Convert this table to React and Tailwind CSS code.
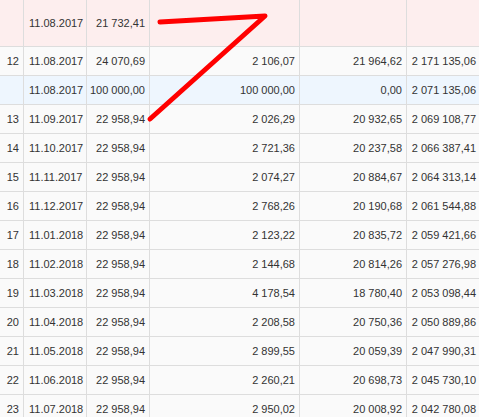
const rows = [
  { n: "", d: "11.08.2017", a: "21 732,41", p: "", i: "", r: "", bg: "bg-[#fdeeee]", h: "h-[47px]" },
  { n: "12", d: "11.08.2017", a: "24 070,69", p: "2 106,07", i: "21 964,62", r: "2 171 135,06" },
  { n: "", d: "11.08.2017", a: "100 000,00", p: "100 000,00", i: "0,00", r: "2 071 135,06", bg: "bg-[#eef6fe]" },
  { n: "13", d: "11.09.2017", a: "22 958,94", p: "2 026,29", i: "20 932,65", r: "2 069 108,77" },
  { n: "14", d: "11.10.2017", a: "22 958,94", p: "2 721,36", i: "20 237,58", r: "2 066 387,41" },
  { n: "15", d: "11.11.2017", a: "22 958,94", p: "2 074,27", i: "20 884,67", r: "2 064 313,14" },
  { n: "16", d: "11.12.2017", a: "22 958,94", p: "2 768,26", i: "20 190,68", r: "2 061 544,88" },
  { n: "17", d: "11.01.2018", a: "22 958,94", p: "2 123,22", i: "20 835,72", r: "2 059 421,66" },
  { n: "18", d: "11.02.2018", a: "22 958,94", p: "2 144,68", i: "20 814,26", r: "2 057 276,98" },
  { n: "19", d: "11.03.2018", a: "22 958,94", p: "4 178,54", i: "18 780,40", r: "2 053 098,44" },
  { n: "20", d: "11.04.2018", a: "22 958,94", p: "2 208,58", i: "20 750,36", r: "2 050 889,86" },
  { n: "21", d: "11.05.2018", a: "22 958,94", p: "2 899,55", i: "20 059,39", r: "2 047 990,31" },
  { n: "22", d: "11.06.2018", a: "22 958,94", p: "2 260,21", i: "20 698,73", r: "2 045 730,10" },
  { n: "23", d: "11.07.2018", a: "22 958,94", p: "2 950,02", i: "20 008,92", r: "2 042 780,08" },
];

const cell = "flex items-center border-r border-[#dddddd] shrink-0";

export default function App() {
  return (
    <div className="relative w-[479px] h-[417px] overflow-hidden bg-white text-[11px] text-[#333333]" style={{ fontFamily: '"Liberation Sans", Arial, sans-serif' }}>
      {rows.map((row, idx) => (
        <div key={idx} className={`flex border-b border-[#dddddd] ${row.h || "h-[29px]"} ${row.bg || "bg-[#fafafa]"}`}>
          <div className={`${cell} w-[24px] justify-end pr-[4px]`}>{row.n}</div>
          <div className={`${cell} w-[63px] pl-[5px]`}>{row.d}</div>
          <div className={`${cell} w-[63px] justify-end pr-[4px]`}>{row.a}</div>
          <div className={`${cell} w-[150px] justify-end pr-[4px]`}>{row.p}</div>
          <div className={`${cell} w-[107px] justify-end pr-[4px]`}>{row.i}</div>
          <div className={`${cell} w-[73px] justify-end pr-[4px] border-r-0`}>{row.r}</div>
        </div>
      ))}
      <svg className="absolute left-0 top-0" width="479" height="417">
        <polyline points="160,22 265,16 150,119" fill="none" stroke="#ff0000" strokeWidth="5" strokeLinecap="round" strokeLinejoin="round" />
      </svg>
    </div>
  );
}
